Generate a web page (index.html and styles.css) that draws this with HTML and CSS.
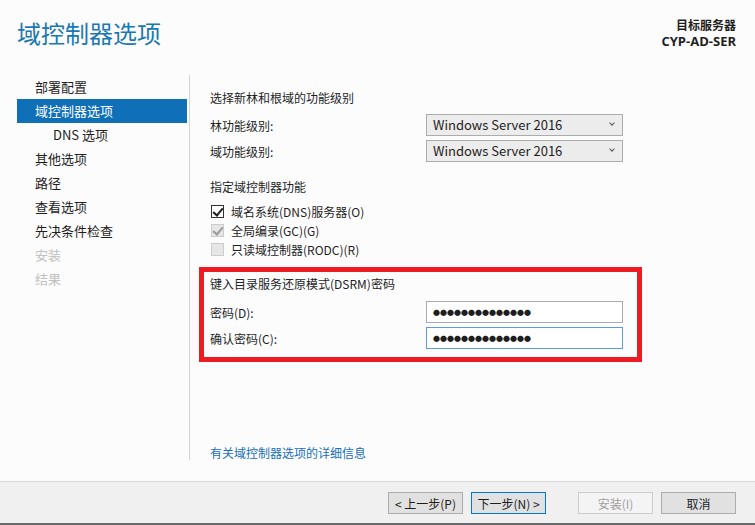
FILE: index.html
```html
<!DOCTYPE html>
<html lang="zh-CN">

<head>
    <meta charset="UTF-8">
    <meta name="viewport" content="width=device-width, initial-scale=1.0">
    <title>域控制器选项</title>
    <link rel="stylesheet" href="styles.css">
</head>

<body>
    <div class="wizard">
        <div class="header">
            <h1>域控制器选项</h1>
            <div class="target">
                <div>目标服务器</div>
                <div>CYP-AD-SER</div>
            </div>
        </div>

        <div class="main">
            <ul class="nav">
                <li>部署配置</li>
                <li class="active">域控制器选项</li>
                <li class="sub">DNS 选项</li>
                <li>其他选项</li>
                <li>路径</li>
                <li>查看选项</li>
                <li>先决条件检查</li>
                <li class="disabled">安装</li>
                <li class="disabled">结果</li>
            </ul>

            <div class="content">
                <p class="section">选择新林和根域的功能级别</p>
                <div class="field">
                    <label>林功能级别:</label>
                    <div class="select">Windows Server 2016<span class="arrow"></span></div>
                </div>
                <div class="field">
                    <label>域功能级别:</label>
                    <div class="select">Windows Server 2016<span class="arrow"></span></div>
                </div>

                <p class="section spaced">指定域控制器功能</p>
                <div class="check">
                    <span class="box checked"></span>域名系统(DNS)服务器(O)
                </div>
                <div class="check">
                    <span class="box checked disabled"></span>全局编录(GC)(G)
                </div>
                <div class="check">
                    <span class="box disabled"></span>只读域控制器(RODC)(R)
                </div>

                <div class="dsrm">
                    <p class="section">键入目录服务还原模式(DSRM)密码</p>
                    <div class="field">
                        <label>密码(D):</label>
                        <div class="password">●●●●●●●●●●●●●●</div>
                    </div>
                    <div class="field">
                        <label>确认密码(C):</label>
                        <div class="password focus">●●●●●●●●●●●●●●</div>
                    </div>
                </div>

                <a class="more" href="#">有关域控制器选项的详细信息</a>
            </div>
        </div>

        <div class="footer">
            <button>&lt; 上一步(P)</button>
            <button class="default">下一步(N) &gt;</button>
            <button class="install" disabled>安装(I)</button>
            <button>取消</button>
        </div>
    </div>
</body>

</html>
```

FILE: styles.css
```css
body {
    margin: 0;
    padding: 0;
    background-color: #fcfcfc;
    font-family: "Microsoft YaHei", "Noto Sans CJK SC", sans-serif;
    color: #1e1e1e;
}

.wizard {
    display: flex;
    flex-direction: column;
    height: 525px;
    box-sizing: border-box;
}

.header {
    display: flex;
    justify-content: space-between;
    height: 75px;
    padding: 0 19px 0 17px;
    box-sizing: border-box;
}

h1 {
    margin: 16px 0 0;
    font-size: 24px;
    font-weight: normal;
    line-height: 34px;
    color: #1a79b0;
}

.target {
    margin-top: 17px;
    text-align: right;
    font-size: 12px;
    font-weight: bold;
    line-height: 16px;
}

.target div:last-child {
    font-size: 13px;
    font-family: "Open Sans", "Noto Sans CJK SC", sans-serif;
}

.main {
    display: flex;
    flex: 1;
}

/* step list on the left */
.nav {
    list-style: none;
    width: 172px;
    margin: 0 0 21px 17px;
    padding: 0;
    border-right: 1px solid #d4d4d4;
    font-size: 13px;
}

.nav li {
    height: 24px;
    line-height: 24px;
    padding-left: 18px;
    margin-right: 2px;
}

.nav li.sub {
    padding-left: 36px;
}

.nav li.active {
    background-color: #0f70b7;
    color: white;
}

.nav li.disabled {
    color: #c0c0c0;
}

.content {
    padding: 14px 0 0 20px;
    font-size: 12px;
    display: flex;
    flex-direction: column;
}

.section {
    margin: 0 0 7px;
    line-height: 18px;
}

.section.spaced {
    margin-top: 12px;
    margin-bottom: 6px;
}

.field {
    display: flex;
    align-items: center;
    margin-bottom: 4px;
}

.field label {
    width: 216px;
}

.select,
.password {
    position: relative;
    width: 197px;
    height: 22px;
    box-sizing: border-box;
    padding-left: 6px;
    line-height: 20px;
}

.select {
    border: 1px solid #acacac;
    background-color: #ececec;
    font-size: 13px;
}

.arrow {
    position: absolute;
    right: 8px;
    top: 6px;
    width: 3px;
    height: 3px;
    border-right: 1px solid #555;
    border-bottom: 1px solid #555;
    transform: rotate(45deg);
}

.check {
    display: flex;
    align-items: center;
    height: 19px;
}

.box {
    position: relative;
    width: 13px;
    height: 13px;
    box-sizing: border-box;
    border: 1px solid #333;
    background-color: white;
    margin: 0 7px 0 1px;
}

.box.disabled {
    border-color: #cccccc;
    background-color: #e6e6e6;
}

.box.checked::after {
    content: "";
    position: absolute;
    left: 3px;
    top: 0;
    width: 4px;
    height: 8px;
    border-right: 2px solid #1e1e1e;
    border-bottom: 2px solid #1e1e1e;
    transform: rotate(40deg);
}

.box.checked.disabled::after {
    border-color: #9a9a9a;
}

/* highlighted password block */
.dsrm {
    width: 443px;
    box-sizing: border-box;
    margin: 8px 0 0 -11px;
    padding: 3px 0 4px 6px;
    border: 5px solid #ed1c24;
}

.dsrm .section {
    margin-bottom: 8px;
}

.password {
    border: 1px solid #acacac;
    background-color: white;
    font-family: "Noto Sans CJK SC", sans-serif;
    font-size: 7px;
    color: #1e1e1e;
}

.password.focus {
    border-color: #569de5;
}

.more {
    margin-top: 82px;
    color: #1a6fb8;
    text-decoration: none;
}

.footer {
    display: flex;
    justify-content: flex-end;
    align-items: flex-start;
    height: 44px;
    padding: 10px 19px 0 0;
    box-sizing: border-box;
    background-color: #f0f0f0;
    border-top: 1px solid #dadada;
    border-bottom: 2px solid #6a6a6a;
}

button {
    width: 75px;
    height: 22px;
    margin-left: 8px;
    padding: 0;
    border: 1px solid #adadad;
    background-color: #e1e1e1;
    font-family: "Microsoft YaHei", "Noto Sans CJK SC", sans-serif;
    font-size: 12px;
    color: #1e1e1e;
}

button.default {
    border-color: #0078d7;
}

button.install {
    margin-left: 32px;
    background-color: #f4f4f4;
    border-color: #cccccc;
    color: #a0a0a0;
}
```
